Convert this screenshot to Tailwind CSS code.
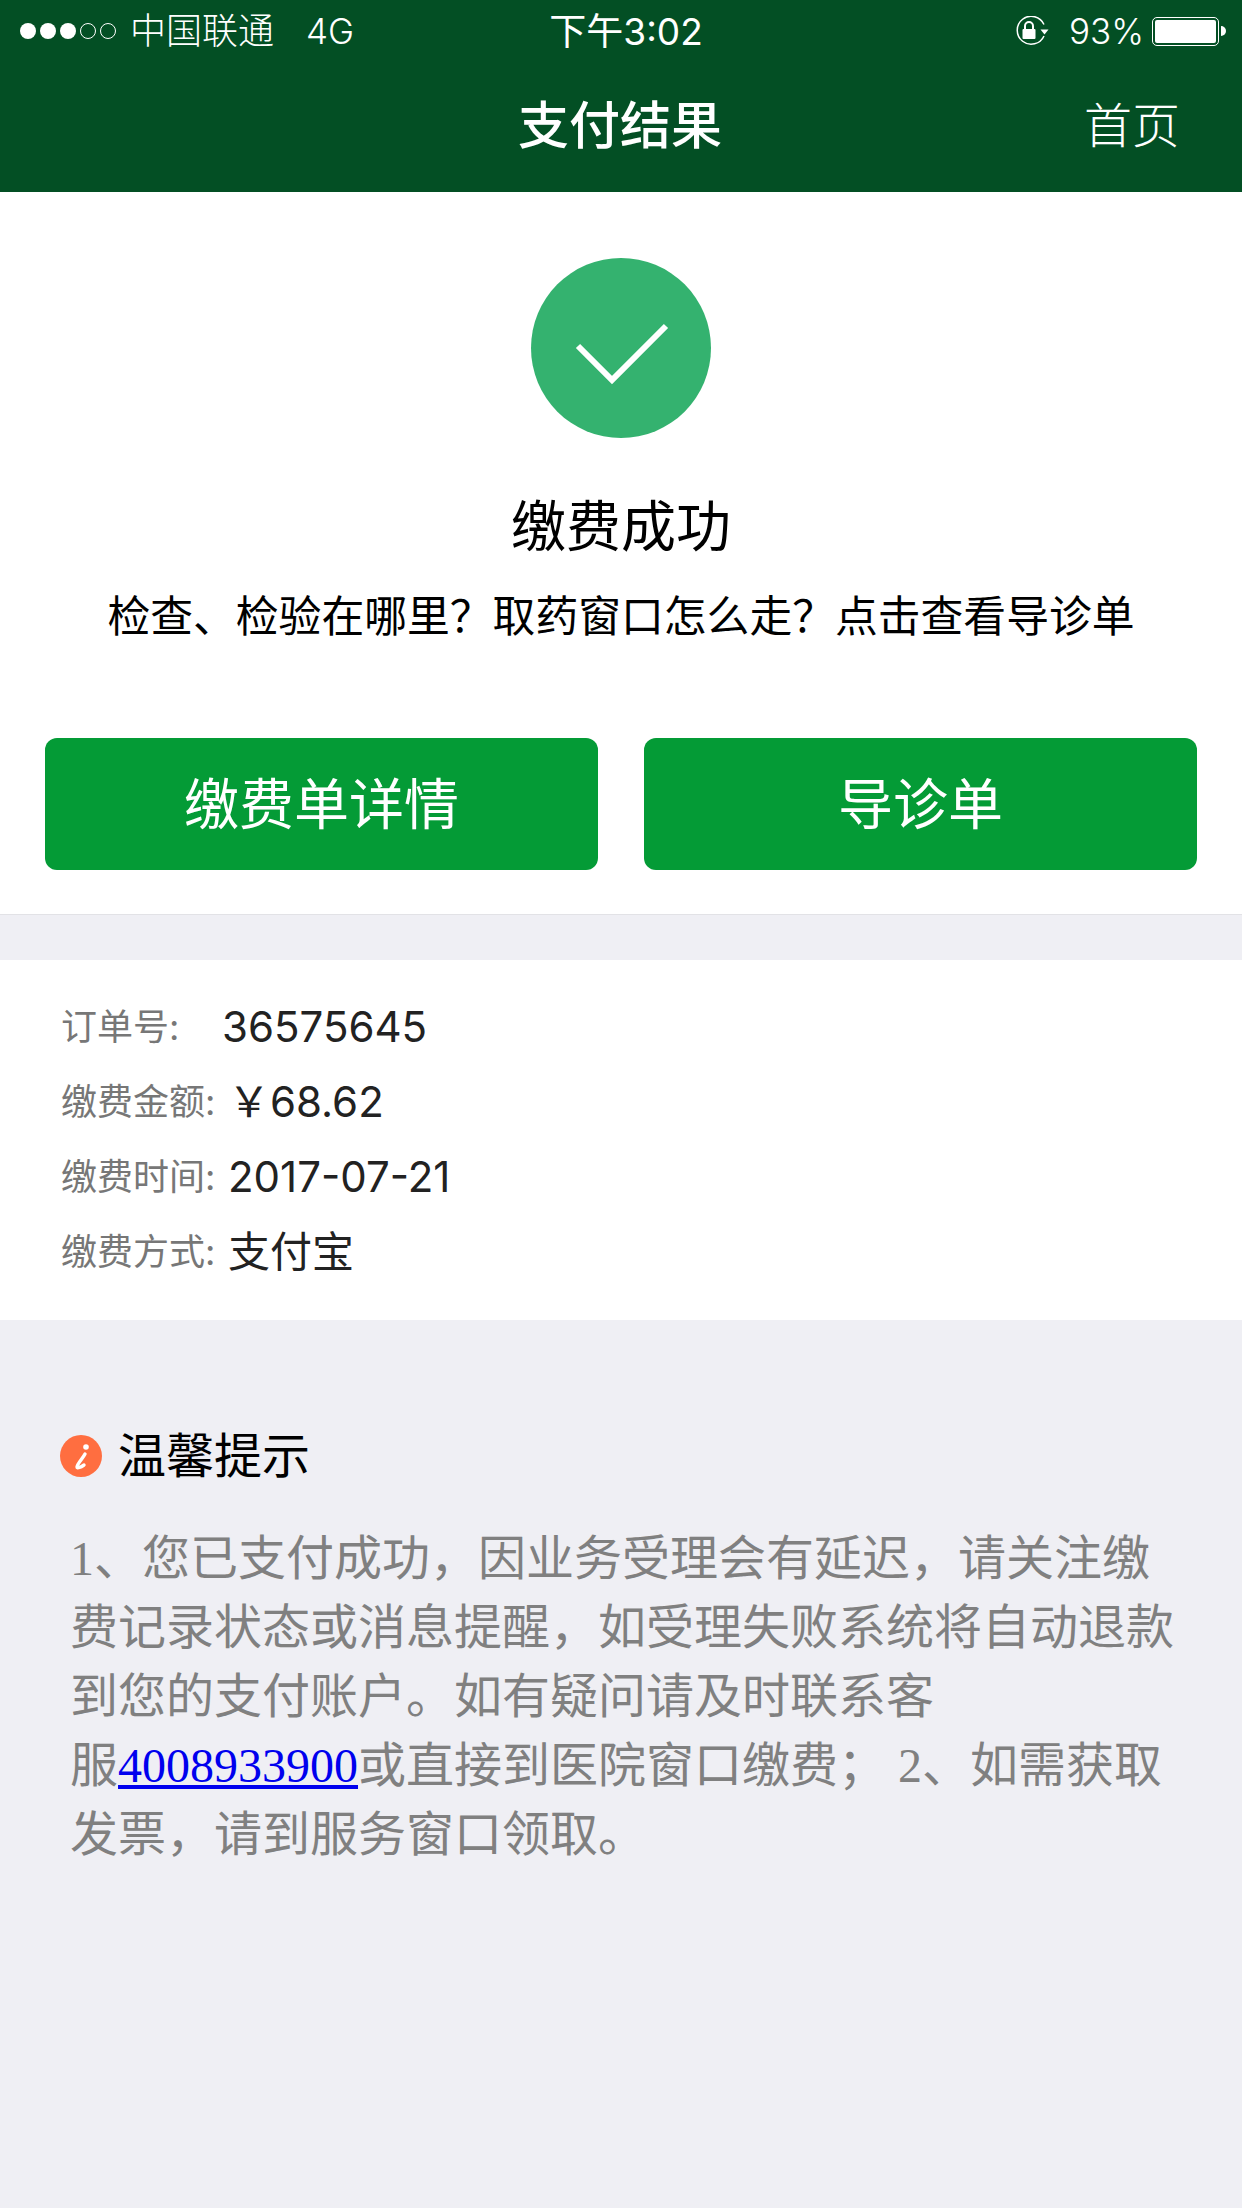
<!DOCTYPE html>
<html lang="zh-CN">
<head>
<meta charset="utf-8">
<script src="https://cdn.jsdelivr.net/npm/@tailwindcss/browser@4"></script>
<title>支付结果</title>
</head>
<body class="m-0 bg-[#efeff4]">
<div class="w-[1242px] h-[2208px] flex flex-col bg-[#efeff4] overflow-hidden font-['Inter','Noto_Sans_CJK_SC',sans-serif]">
  <header class="h-[192px] bg-[#034f24] text-white shrink-0">
    <div class="h-[60px] pt-[2px] grid grid-cols-[1fr_auto_1fr] items-center pl-[20px] pr-[16px] text-[36px] font-light leading-none">
      <div class="flex items-center">
        <div class="flex items-center gap-[4px]">
          <span class="w-[16px] h-[16px] rounded-full bg-white"></span>
          <span class="w-[16px] h-[16px] rounded-full bg-white"></span>
          <span class="w-[16px] h-[16px] rounded-full bg-white"></span>
          <span class="w-[16px] h-[16px] rounded-full border border-white"></span>
          <span class="w-[16px] h-[16px] rounded-full border border-white"></span>
        </div>
        <span class="ml-[14px]">中国联通</span>
        <span class="ml-[32px] text-[35px]">4G</span>
      </div>
      <div class="font-normal text-[37px] pl-[6px]">下午3:02</div>
      <div class="flex items-center justify-end">
        <svg class="w-[36px] h-[30px]" viewBox="0 0 36 30" fill="none">
          <path d="M31 8.5A14 14 0 1 0 31 20" stroke="#fff" stroke-width="1.5"/>
          <path d="M27.5 13.5h8l-4 5z" fill="#fff"/>
          <rect x="9.5" y="13" width="13" height="10" rx="1" fill="#fff"/>
          <path d="M12 13V10a4 4 0 0 1 8 0v3" stroke="#fff" stroke-width="2"/>
        </svg>
        <span class="ml-[20px] text-[35px]">93%</span>
        <div class="ml-[8px] w-[67px] h-[29px] rounded-[5px] border border-white p-[2px]">
          <div class="w-full h-full bg-white rounded-[2px]"></div>
        </div>
        <div class="ml-[2px] w-[5px] h-[10px] rounded-r-full bg-white"></div>
      </div>
    </div>
    <nav class="h-[132px] grid grid-cols-[1fr_auto_1fr] items-center">
      <div></div>
      <h1 class="text-[51px] font-medium pr-[2px]">支付结果</h1>
      <a class="justify-self-end pr-[62px] text-[48px] font-light">首页</a>
    </nav>
  </header>

  <section class="bg-white h-[723px] shrink-0 border-b border-[#e2e2e6] flex flex-col items-center pt-[66px]">
    <div class="w-[180px] h-[180px] rounded-full bg-[#34b26f] flex items-center justify-center">
      <svg class="w-[180px] h-[180px]" viewBox="0 0 180 180" fill="none">
        <path d="M47 58 L81 92 L135 38" transform="translate(0 30)" stroke="#fff" stroke-width="6"/>
      </svg>
    </div>
    <h2 class="mt-[48px] text-[55px] leading-[80px] font-normal text-black">缴费成功</h2>
    <p class="mt-[21px] text-[42.8px] leading-[60px] text-black font-normal">检查、检验在哪里&#xFF1F;取药窗口怎么走&#xFF1F;点击查看导诊单</p>
    <div class="mt-[91px] w-full px-[45px] grid grid-cols-2 gap-[46px]">
      <a class="h-[132px] rounded-[12px] bg-[#049b36] text-white text-[55px] font-normal flex items-center justify-center">缴费单详情</a>
      <a class="h-[132px] rounded-[12px] bg-[#049b36] text-white text-[55px] font-normal flex items-center justify-center">导诊单</a>
    </div>
  </section>

  <section class="mt-[45px] bg-white h-[360px] shrink-0 px-[61px] pt-[29px] text-[#222]">
    <div class="h-[75px] flex items-center"><span class="w-[161px] text-[36px] text-[#777]">订单号:</span><span class="text-[42px]">36575645</span></div>
    <div class="h-[75px] flex items-center"><span class="w-[167px] text-[36px] text-[#777]">缴费金额:</span><span class="text-[42px]">&#xFFE5;68.62</span></div>
    <div class="h-[75px] flex items-center"><span class="w-[167px] text-[36px] text-[#777]">缴费时间:</span><span class="text-[42px]">2017-07-21</span></div>
    <div class="h-[75px] flex items-center"><span class="w-[167px] text-[36px] text-[#777]">缴费方式:</span><span class="text-[42px]">支付宝</span></div>
  </section>

  <section class="pt-[104px] px-[60px]">
    <div class="flex items-center h-[64px]">
      <svg class="w-[42px] h-[42px] shrink-0" viewBox="0 0 42 42">
        <circle cx="21" cy="21" r="21" fill="#ff6e40"/>
        <circle cx="26" cy="12" r="2.8" fill="#fff"/>
        <path d="M25 19c-2 4-8 10-8 13 0 2 4 0 7-2" fill="none" stroke="#fff" stroke-width="3.4" stroke-linecap="round"/>
      </svg>
      <h3 class="ml-[16px] text-[48px] font-normal text-black">温馨提示</h3>
    </div>
    <p class="mt-[36px] pl-[10px] pr-[2px] text-[48px] leading-[69px] text-[#808080] font-['Liberation_Serif','Noto_Sans_CJK_SC',serif]">1、您已支付成功&#xFF0C;因业务受理会有延迟&#xFF0C;请关注缴费记录状态或消息提醒&#xFF0C;如受理失败系统将自动退款到您的支付账户。如有疑问请及时联系客<span class="whitespace-nowrap">服<a class="text-[#0000ee] underline">4008933900</a></span>或直接到医院窗口缴费&#xFF1B; 2、如需获取发票&#xFF0C;请到服务窗口领取。</p>
  </section>
</div>
</body>
</html>
